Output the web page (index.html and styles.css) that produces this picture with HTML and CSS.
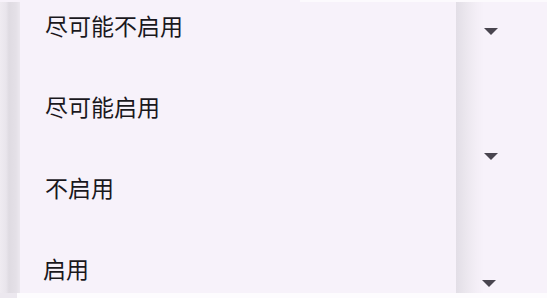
FILE: index.html
```html
<!DOCTYPE html>
<html lang="zh-CN">
<head>
    <meta charset="UTF-8">
    <meta name="viewport" content="width=device-width, initial-scale=1.0">
    <title>选项</title>
    <link rel="stylesheet" href="styles.css">
</head>
<body>
    <div class="screen">
        <div class="top-edge"></div>
        <div class="main">
            <div class="shadow-left"></div>
            <div class="menu">
                <ul class="menu-list">
                    <li class="menu-item">尽可能不启用</li>
                    <li class="menu-item">尽可能启用</li>
                    <li class="menu-item">不启用</li>
                    <li class="menu-item last">启用</li>
                </ul>
            </div>
            <div class="shadow-right"></div>
            <div class="fields">
                <span class="arrow"></span>
                <span class="arrow"></span>
                <span class="arrow low"></span>
            </div>
        </div>
        <div class="bottom-edge"></div>
    </div>
</body>
</html>
```

FILE: styles.css
```css
body {
    margin: 0;
    background-color: #f7f2fa;
    font-family: "Noto Sans CJK SC", "Noto Sans", sans-serif;
    color: #1a181d;
}
.screen {
    width: 547px;
    height: 298px;
    display: flex;
    flex-direction: column;
    overflow: hidden;
}
.top-edge {
    height: 2px;
    flex-shrink: 0;
    background: linear-gradient(to right, #f7f2fa 0, #f7f2fa 300px, #fcfafd 300px);
}
.main {
    flex: 1;
    display: flex;
    min-height: 0;
}
.shadow-left {
    width: 20px;
    flex-shrink: 0;
    background: linear-gradient(to right, #efebf1 0, #e9e5ec 6px, #dfdbe2 9px, #e4e0e7 16px, #ece8ef 20px);
}
.menu {
    width: 436px;
    flex-shrink: 0;
    background: #f7f2fa;
    overflow: hidden;
}
.menu-list {
    list-style: none;
    margin: -18px 0 0 0;
    padding: 0;
}
.menu-item {
    height: 81px;
    display: flex;
    align-items: center;
    padding-left: 25px;
    font-size: 23px;
}
.menu-item.last {
    padding-left: 23px;
}
.shadow-right {
    width: 28px;
    flex-shrink: 0;
    background: linear-gradient(to right, #e2dee6 0, #ebe7ee 10px, #f3eef6 20px, #f7f2fa 28px);
}
.fields {
    flex: 1;
    display: flex;
    flex-direction: column;
    padding-top: 26px;
}
.arrow {
    width: 0;
    height: 0;
    border-left: 7px solid transparent;
    border-right: 7px solid transparent;
    border-top: 7px solid #49454f;
    margin-bottom: 118px;
}
.arrow.low {
    margin-left: -2px;
    margin-top: 2px;
}
.bottom-edge {
    height: 5px;
    flex-shrink: 0;
    background: linear-gradient(to right, #ece8ef 0, #ece8ef 17px, #fdfcfe 17px);
}
```
